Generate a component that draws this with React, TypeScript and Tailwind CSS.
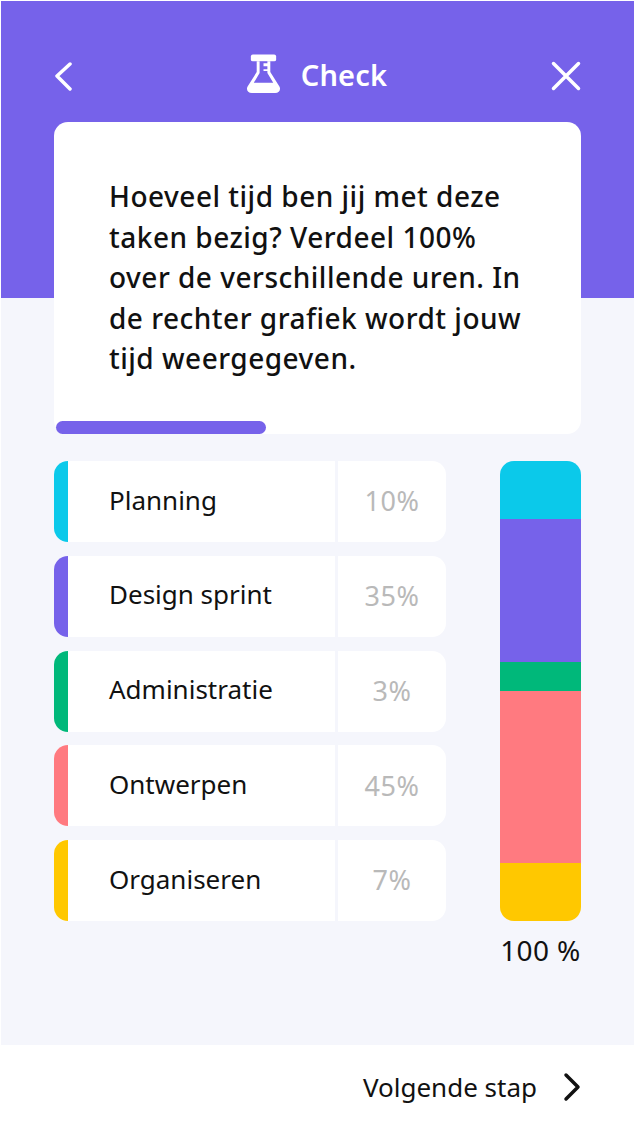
const tasks = [
  { name: "Planning", pct: "10%", color: "bg-[#0bc9ea]" },
  { name: "Design sprint", pct: "35%", color: "bg-[#7662ea]" },
  { name: "Administratie", pct: "3%", color: "bg-[#00b87a]" },
  { name: "Ontwerpen", pct: "45%", color: "bg-[#ff7a80]" },
  { name: "Organiseren", pct: "7%", color: "bg-[#ffc800]" },
];

function Flask() {
  return (
    <svg width="35" height="40" viewBox="0 0 36 40" fill="none">
      <rect x="5" y="0" width="26" height="7" rx="2" fill="white" />
      <path d="M11 7v11L1.500 33C0 36 2 39.500 6 39.500h24c4 0 6-3.500 4.500-6.500L25 18V7z" fill="white" />
      <path d="M14 7v12L8 29h20l-6-10v-2h-4v-2h4v-3h-4V9h4V7z" fill="#7662ea" />
    </svg>
  );
}

export default function App() {
  return (
    <div className="w-[634px] h-[1127px] bg-white pl-px pt-px overflow-hidden">
      <div className="h-full flex flex-col bg-[#f5f6fc] font-['Noto_Sans',sans-serif] text-[#111]">
        <header className="h-[297px] shrink-0 bg-[#7662ea] pl-[53px] pr-[53px] pt-[53px]">
          <div className="flex items-center justify-between h-[44px]">
            <svg width="20" height="30" viewBox="0 0 20 30" fill="none">
              <path d="M16 3 L3 15 L16 28" stroke="white" strokeWidth="3.500" strokeLinecap="round" strokeLinejoin="round" />
            </svg>
            <div className="flex items-center gap-[20px] ml-[8px] pb-[4px]">
              <Flask />
              <span className="text-[29px] tracking-[0.2px] font-semibold text-white leading-none">Check</span>
            </div>
            <svg width="30" height="30" viewBox="0 0 30 30" fill="none">
              <path d="M2.500 2.500 L27.500 27.500 M27.500 2.500 L2.500 27.500" stroke="white" strokeWidth="3.500" strokeLinecap="round" />
            </svg>
          </div>
        </header>

        <main className="flex-1 -mt-[176px] pl-[53px] pr-[53px]">
          <section className="h-[312px] bg-white rounded-[14px] flex flex-col justify-between pl-[2px]">
            <p className="w-[424px] pl-[53px] box-content pt-[54px] text-[28px] tracking-[0.5px] leading-[40.500px] font-medium">
              Hoeveel tijd ben jij met deze taken bezig? Verdeel 100% over de verschillende uren. In de rechter grafiek wordt jouw tijd weergegeven.
            </p>
            <div className="w-[210px] h-[13px] bg-[#7662ea] rounded-full" />
          </section>

          <div className="flex justify-between mt-[27px]">
            <div className="w-[392px] flex flex-col gap-[13.750px]">
              {tasks.map((t) => (
                <div key={t.name} className="h-[81px] flex bg-white rounded-[14px] overflow-hidden">
                  <div className={`w-[14px] ${t.color}`} />
                  <div className="w-[270px] flex items-center pl-[41px] pb-[3px] text-[26px] border-r-[3px] border-[#f5f6fc]">
                    {t.name}
                  </div>
                  <div className="flex-1 flex items-center justify-center text-[27px] tracking-[0.5px] text-[#b9b9b9]">
                    {t.pct}
                  </div>
                </div>
              ))}
            </div>

            <div className="w-[81px] flex flex-col items-center">
              <div className="w-full h-[460px] rounded-[14px] overflow-hidden flex flex-col">
                <div className="h-[58px] bg-[#0bc9ea]" />
                <div className="h-[143px] bg-[#7662ea]" />
                <div className="h-[29px] bg-[#00b87a]" />
                <div className="h-[172px] bg-[#ff7a80]" />
                <div className="h-[58px] bg-[#ffc800]" />
              </div>
              <div className="mt-[13px] text-[28px] tracking-[0.4px] leading-[32px] whitespace-nowrap">100 %</div>
            </div>
          </div>
        </main>

        <footer className="h-[82px] shrink-0 bg-white flex items-center justify-end gap-[26px] pr-[53px] pt-[2px]">
          <span className="text-[26px]">Volgende stap</span>
          <svg width="18" height="30" viewBox="0 0 18 30" fill="none">
            <path d="M3 3 L15 15 L3 27" stroke="#111" strokeWidth="3.500" strokeLinecap="round" strokeLinejoin="round" />
          </svg>
        </footer>
      </div>
    </div>
  );
}
